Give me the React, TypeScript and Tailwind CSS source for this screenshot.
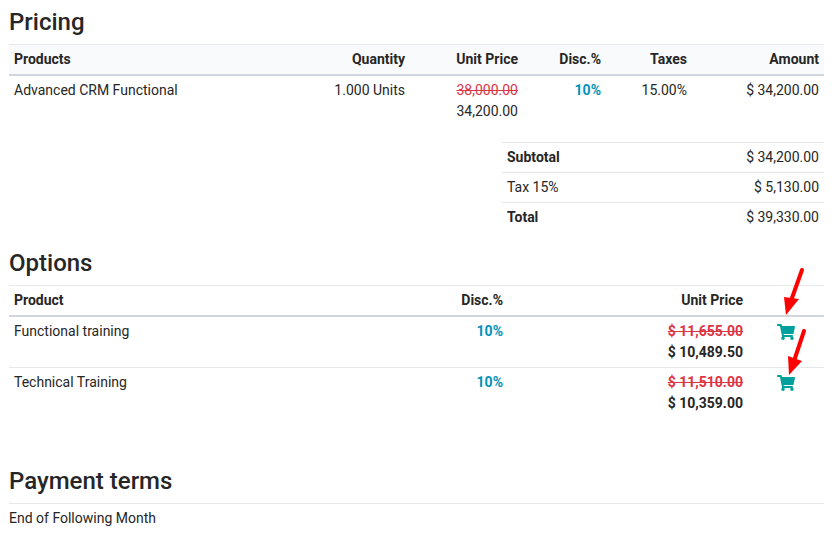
import { FaShoppingCart } from "react-icons/fa";

const lines = [
  { name: "Functional training", disc: "10%", was: "$ 11,655.00", now: "$ 10,489.50" },
  { name: "Technical Training", disc: "10%", was: "$ 11,510.00", now: "$ 10,359.00" },
];

const totals = [
  { label: "Subtotal", value: "$ 34,200.00", bold: true },
  { label: "Tax 15%", value: "$ 5,130.00", bold: false },
  { label: "Total", value: "$ 39,330.00", bold: true },
];

const pricingCols = "grid grid-cols-[1fr_96px_113px_83px_86px_132px] px-px";
const optionCols = "grid grid-cols-[1fr_100px_240px_76px] px-px";

export default function App() {
  return (
    <div
      className="relative min-h-screen bg-white pr-2 pl-2 text-sm leading-[21px] text-neutral-800"
      style={{ fontFamily: "Roboto, sans-serif" }}
    >
      <div className="ml-px">
        <h2 className="pt-1 text-2xl leading-9 font-medium">Pricing</h2>

        {/* Pricing table */}
        <div className="mt-1">
          <div className={`${pricingCols} border-t border-b-2 border-t-gray-200 border-b-gray-300 bg-gray-50 py-1 font-bold`}>
            <div className="px-1">Products</div>
            <div className="px-1 text-right">Quantity</div>
            <div className="px-1 text-right">Unit Price</div>
            <div className="px-1 text-right">Disc.%</div>
            <div className="px-1 text-right">Taxes</div>
            <div className="px-1 text-right">Amount</div>
          </div>
          <div className={`${pricingCols} py-1`}>
            <div className="px-1">Advanced CRM Functional</div>
            <div className="px-1 text-right">1.000 Units</div>
            <div className="px-1 text-right">
              <div className="text-[#dc3545] line-through">38,000.00</div>
              <div>34,200.00</div>
            </div>
            <div className="px-1 text-right font-bold text-cyan-600">10%</div>
            <div className="px-1 text-right">15.00%</div>
            <div className="px-1 text-right">$ 34,200.00</div>
          </div>

          {/* Totals */}
          <div className="mt-4 ml-auto w-[322px] pb-px">
            {totals.map((row) => (
              <div
                key={row.label}
                className="flex justify-between border-t border-gray-200 px-[5px] py-1"
              >
                <span className={row.bold ? "font-bold" : ""}>{row.label}</span>
                <span>{row.value}</span>
              </div>
            ))}
          </div>
        </div>

        <h2 className="mt-3 text-2xl leading-9 font-medium">Options</h2>

        {/* Options table */}
        <div className="mt-1 pb-px">
          <div className={`${optionCols} border-t border-b-2 border-t-gray-200 border-b-gray-300 py-1 font-bold`}>
            <div className="px-1">Product</div>
            <div className="px-1 text-right">Disc.%</div>
            <div className="px-1 text-right">Unit Price</div>
          </div>
          {lines.map((line, i) => (
            <div
              key={line.name}
              className={`${optionCols} py-1 ${i === 0 ? "border-b border-gray-200" : ""}`}
            >
              <div className="px-1">{line.name}</div>
              <div className="px-1 text-right font-bold text-cyan-600">{line.disc}</div>
              <div className="px-1 text-right font-bold">
                <div className="text-[#dc3545] line-through">{line.was}</div>
                <div>{line.now}</div>
              </div>
              <div className="pt-0.5 pl-7.5 text-lg text-[#00a09d]">
                <FaShoppingCart className="block" />
              </div>
            </div>
          ))}
        </div>

        <h2 className="mt-11 text-2xl leading-9 font-medium">Payment terms</h2>
        <div className="mt-1 border-t border-gray-200 pt-1">End of Following Month</div>
      </div>

      {/* Red annotation arrows */}
      <svg className="absolute top-0 left-0" width="832" height="538" viewBox="0 0 832 538" fill="none">
        <path d="M802 270 L792 298" stroke="#ff0000" strokeWidth="4" strokeLinecap="round" />
        <path d="M784 297 L799 299 L786 315 Z" fill="#ff0000" />
        <path d="M804 331 L795 358" stroke="#ff0000" strokeWidth="4" strokeLinecap="round" />
        <path d="M788 356 L802 361 L789 375 Z" fill="#ff0000" />
      </svg>
    </div>
  );
}
